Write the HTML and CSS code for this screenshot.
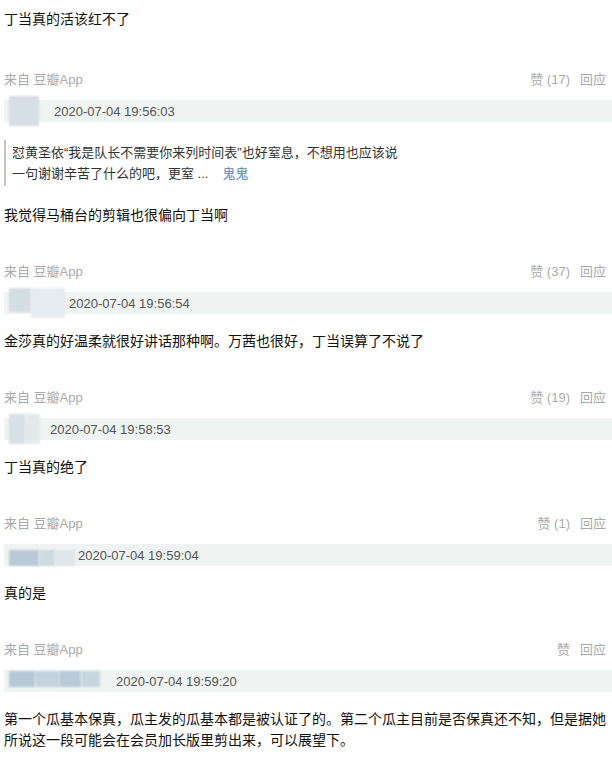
FILE: index.html
```html
<!DOCTYPE html>
<html lang="zh-CN">
<head>
<meta charset="utf-8">
<title>回应</title>
<link rel="stylesheet" href="styles.css">
</head>
<body>
<div class="page">
  <p class="text text-first">丁当真的活该红不了</p>

  <div class="comment">
    <div class="meta"><span class="from">来自 豆瓣App</span><span class="acts"><span>赞 (17)</span><span>回应</span></span></div>
    <div class="bar"><span class="name"><i class="blk b1"></i></span><span class="time">2020-07-04 19:56:03</span></div>
    <blockquote class="quote">怼黄圣依“我是队长不需要你来列时间表”也好窒息，不想用也应该说<br>一句谢谢辛苦了什么的吧，更窒 ...<a class="qauthor">鬼鬼</a></blockquote>
    <p class="text">我觉得马桶台的剪辑也很偏向丁当啊</p>
  </div>

  <div class="comment">
    <div class="meta"><span class="from">来自 豆瓣App</span><span class="acts"><span>赞 (37)</span><span>回应</span></span></div>
    <div class="bar"><span class="name n2"><i class="blk b2a"></i><i class="blk b2b"></i></span><span class="time">2020-07-04 19:56:54</span></div>
    <p class="text">金莎真的好温柔就很好讲话那种啊。万茜也很好，丁当误算了不说了</p>
  </div>

  <div class="comment">
    <div class="meta"><span class="from">来自 豆瓣App</span><span class="acts"><span>赞 (19)</span><span>回应</span></span></div>
    <div class="bar"><span class="name n3"><i class="blk b3a"></i><i class="blk b3b"></i></span><span class="time">2020-07-04 19:58:53</span></div>
    <p class="text">丁当真的绝了</p>
  </div>

  <div class="comment">
    <div class="meta"><span class="from">来自 豆瓣App</span><span class="acts"><span>赞 (1)</span><span>回应</span></span></div>
    <div class="bar"><span class="name n4"><i class="blk b4a"></i><i class="blk b4b"></i><i class="blk b4c"></i></span><span class="time">2020-07-04 19:59:04</span></div>
    <p class="text">真的是</p>
  </div>

  <div class="comment">
    <div class="meta"><span class="from">来自 豆瓣App</span><span class="acts"><span>赞</span><span>回应</span></span></div>
    <div class="bar"><span class="name n5"><i class="blk b5a"></i><i class="blk b5b"></i><i class="blk b5c"></i><i class="blk b5d"></i></span><span class="time">2020-07-04 19:59:20</span></div>
    <p class="text">第一个瓜基本保真，瓜主发的瓜基本都是被认证了的。第二个瓜主目前是否保真还不知，但是据她所说这一段可能会在会员加长版里剪出来，可以展望下。</p>
  </div>
</div>
</body>
</html>
```

FILE: styles.css
```css
html, body {
  margin: 0;
  padding: 0;
  background: #fff;
}

.page {
  padding: 9px 6px 0 4px;
  font-family: "Liberation Sans", "Noto Sans CJK SC", sans-serif;
  color: #111;
}

.text {
  margin: 0 0 36px;
  font-size: 14px;
  line-height: 21px;
}

.text-first {
  margin-bottom: 40px;
}

.meta {
  display: flex;
  justify-content: space-between;
  font-size: 13px;
  line-height: 20px;
  color: #aaa;
}

.acts {
  display: flex;
  gap: 10px;
}

.bar {
  display: flex;
  align-items: center;
  height: 22px;
  margin: 10px -6px 17px 0;
  background: #eff3f2;
}

.name {
  display: flex;
  align-items: center;
  height: 22px;
  margin-left: 5px;
  margin-right: 15px;
}

.blk {
  display: block;
  height: 30px;
  filter: blur(1.2px);
}

.b1 { width: 30px; background: #d6dfe6; }

.n2 { margin-right: 4px; }
.b2a { width: 22px; background: #d3dde4; height: 24px; margin-top: -6px; }
.b2b { width: 34px; background: #e6ecef; height: 30px; }

.n3 { margin-right: 10px; }
.b3a { width: 16px; background: #d6e0e5; }
.b3b { width: 15px; background: #e3eaec; }

.n4 { margin-right: 3px; }
.b4a { width: 30px; background: #b9cad6; height: 16px; margin-top: 6px; }
.b4b { width: 16px; background: #cfdbe1; height: 16px; margin-top: 6px; }
.b4c { width: 20px; background: #dfe7e9; height: 16px; margin-top: 6px; }

.n5 { margin-right: 16px; }
.b5a { width: 26px; background: #b5c8d6; height: 16px; margin-top: -4px; }
.b5b { width: 24px; background: #c3d3de; height: 16px; margin-top: -4px; }
.b5c { width: 22px; background: #b9cbd8; height: 16px; margin-top: -4px; }
.b5d { width: 19px; background: #c7d6df; height: 16px; margin-top: -4px; }

.time {
  font-size: 13px;
  color: #555;
}

.quote {
  margin: 18px 0 19px;
  padding: 2px 0 2px 6px;
  border-left: 2px solid #c4c4c4;
  font-size: 13px;
  line-height: 21px;
  color: #333;
}

.qauthor {
  margin-left: 14px;
  color: #5b85c2;
}
```
